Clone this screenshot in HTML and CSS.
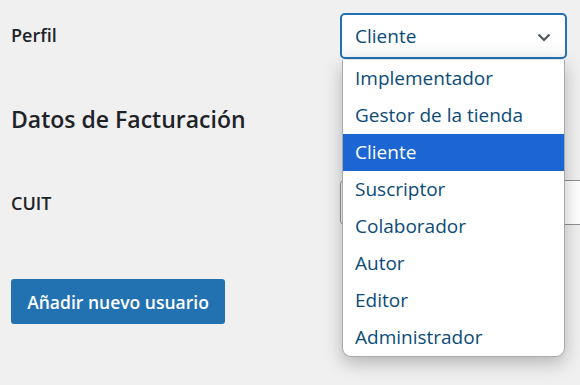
FILE: index.html
```html
<!DOCTYPE html>
<html lang="es">
<head>
    <meta charset="UTF-8">
    <title>Añadir nuevo usuario</title>
    <link rel="stylesheet" href="styles.css">
</head>
<body>
    <form class="user-form">
        <div class="form-row row-role">
            <label class="field-label">Perfil</label>
            <div class="field select-wrap">
                <div class="select-box">
                    <span>Cliente</span>
                    <svg class="chevron" width="14" height="9" viewBox="0 0 14 9"><path d="M1.5 1.5 L7 7 L12.5 1.5" fill="none" stroke="#50575e" stroke-width="2.2"/></svg>
                </div>
                <!-- lista desplegada -->
                <ul class="select-list">
                    <li>Implementador</li>
                    <li>Gestor de la tienda</li>
                    <li class="selected">Cliente</li>
                    <li>Suscriptor</li>
                    <li>Colaborador</li>
                    <li>Autor</li>
                    <li>Editor</li>
                    <li>Administrador</li>
                </ul>
            </div>
        </div>

        <h2 class="section-title">Datos de Facturación</h2>

        <div class="form-row row-cuit">
            <label class="field-label">CUIT</label>
            <div class="field">
                <input type="text" class="text-input">
            </div>
        </div>

        <button type="button" class="btn-primary">Añadir nuevo usuario</button>
    </form>
</body>
</html>
```

FILE: styles.css
```css
html, body {
    height: 100%;
}

body {
    margin: 0;
    background: #f0f0f1;
    font-family: "Open Sans", sans-serif;
    color: #1d2327;
    overflow: hidden;
}

.user-form {
    padding: 13px 0 0 11px;
}

.form-row {
    display: grid;
    grid-template-columns: 329px 1fr;
    align-items: center;
}

.field-label {
    font-size: 18px;
    font-weight: 600;
    margin-top: -3px;
}

.row-cuit .field-label {
    margin-top: 0;
}

.field {
    position: relative;
}

.select-box {
    width: 227px;
    height: 46px;
    box-sizing: border-box;
    border: 2px solid #2271b1;
    border-radius: 5px;
    background: linear-gradient(#fff 60%, #f6f7f7);
    display: flex;
    align-items: center;
    justify-content: space-between;
    padding: 0 14px 0 13px;
    font-size: 19px;
    color: #0a4b78;
}

.chevron {
    margin-top: 2px;
}

.select-list {
    position: absolute;
    top: 47px;
    left: 2px;
    width: 223px;
    box-sizing: border-box;
    margin: 0;
    padding: 0;
    list-style: none;
    background: #fff;
    border: 1px solid #a7aaad;
    border-top: none;
    border-radius: 0 0 9px 9px;
    box-shadow: 0 6px 18px rgba(0, 0, 0, 0.25);
    z-index: 2;
}

.select-list li {
    height: 37px;
    line-height: 37px;
    padding-left: 12px;
    font-size: 19px;
    color: #0a4b78;
}

.select-list li.selected {
    background: #1b66d3;
    color: #fff;
}

.section-title {
    margin: 46px 0 0;
    font-size: 23px;
    font-weight: 600;
    line-height: 28px;
}

.row-cuit {
    margin-top: 47px;
}

.text-input {
    display: block;
    width: 260px;
    height: 45px;
    box-sizing: border-box;
    border: 1px solid #8c8f94;
    border-radius: 4px;
    background: #fff;
}

.btn-primary {
    margin-top: 54px;
    width: 214px;
    height: 45px;
    border: none;
    border-radius: 3px;
    background: #2271b1;
    color: #fff;
    font-family: inherit;
    font-size: 17.5px;
    font-weight: 600;
}
```
